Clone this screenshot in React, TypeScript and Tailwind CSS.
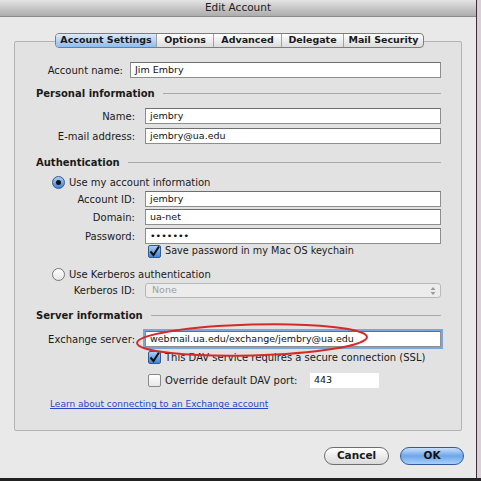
import React from "react";

const font = { fontFamily: '"DejaVu Sans", Verdana, sans-serif' };

const Input = ({ value, w = "flex-1", focus = false }: { value: string; w?: string; focus?: boolean }) => (
  <div
    className={`${w} h-[16px] bg-white border border-[#8e8e8e] border-t-[#6e6e6e] flex items-center pl-[4px] text-[9.5px] text-[#111] ${
      focus ? "ring-2 ring-[#7aa6de]" : ""
    }`}
  >
    {value}
  </div>
);

const Heading = ({ text }: { text: string }) => (
  <div className="h-[14px] flex items-center pl-[21px]">
    <span className="font-bold text-[10px] text-[#1a1a1a]">{text}</span>
    <div className="flex-1 h-px bg-[#a9a9a9] ml-[8px]" />
  </div>
);

const Row = ({ label, children, mt }: { label: string; children: React.ReactNode; mt: string }) => (
  <div className={`flex items-center ${mt}`}>
    <div className="w-[121px] text-right text-[10px] text-[#1a1a1a] pr-px">{label}</div>
    <div className="ml-[9px] flex-1 flex">{children}</div>
  </div>
);

const Radio = ({ on }: { on: boolean }) =>
  on ? (
    <div className="w-[13px] h-[13px] rounded-full border border-[#34598f] bg-gradient-to-b from-[#a9cdf5] to-[#3d84d8] flex items-center justify-center">
      <div className="w-[5px] h-[5px] rounded-full bg-[#111]" />
    </div>
  ) : (
    <div className="w-[13px] h-[13px] rounded-full border border-[#777] bg-gradient-to-b from-white to-[#e6e6e6]" />
  );

const Check = ({ on }: { on: boolean }) =>
  on ? (
    <div className="w-[13px] h-[13px] rounded-[2px] border border-[#34598f] bg-gradient-to-b from-[#a9cdf5] to-[#3d84d8] flex items-center justify-center">
      <svg width="11" height="11" viewBox="0 0 11 11">
        <path d="M1.5 5.5 L4.5 9 L10 0.5" fill="none" stroke="#111" strokeWidth="2" />
      </svg>
    </div>
  ) : (
    <div className="w-[13px] h-[13px] rounded-[2px] border border-[#888] bg-gradient-to-b from-white to-[#e8e8e8]" />
  );

const tabs = ["Account Settings", "Options", "Advanced", "Delegate", "Mail Security"];
const tabW = ["w-[100px]", "w-[57px]", "w-[68px]", "w-[62px]", "w-[80px]"];

export default function App() {
  return (
    <div className="w-[481px] h-[481px] flex flex-col bg-[#222]" style={font}>
      <div className="flex flex-1">
        <div className="w-[477px] flex flex-col bg-[#e9e9e9] border-r border-[#3a3038]">
          <div className="h-[17px] bg-gradient-to-b from-[#e4e4e4] to-[#acacac] border-b border-[#8a8a8a] flex items-center justify-center text-[10.5px] text-[#222]">
            Edit Account
          </div>

          <div className="flex justify-start pl-[55px] mt-[16px] relative z-10">
            <div className="flex h-[15px] rounded-[4px] border border-[#7d7d7d] overflow-hidden bg-gradient-to-b from-white to-[#dcdcdc]">
              {tabs.map((t, i) => (
                <div
                  key={t}
                  className={`${tabW[i]} flex items-center justify-center text-[9.5px] font-bold text-[#1a1a1a] ${
                    i > 0 ? "border-l border-[#a0a0a0]" : ""
                  } ${i === 0 ? "bg-gradient-to-b from-[#dceafa] to-[#8fbcef]" : ""}`}
                >
                  {t}
                </div>
              ))}
            </div>
          </div>

          <div className="mx-[14px] -mt-[7px] border border-[#b3b3b3] bg-[#e2e2e2] rounded-[2px] flex flex-col pr-[20px] pb-[19px]">
            <div className="flex items-center mt-[20px]">
              <div className="w-[108px] text-right text-[10px] text-[#1a1a1a]">Account name:</div>
              <div className="ml-[7px] flex-1 flex">
                <Input value="Jim Embry" />
              </div>
            </div>

            <div className="mt-[8px]">
              <Heading text="Personal information" />
            </div>
            <Row label="Name:" mt="mt-[8px]">
              <Input value="jembry" />
            </Row>
            <Row label="E-mail address:" mt="mt-[4px]">
              <Input value="jembry@ua.edu" />
            </Row>

            <div className="mt-[11px]">
              <Heading text="Authentication" />
            </div>
            <div className="flex items-center h-[14px] mt-[6px] pl-[37px] gap-[4px]">
              <Radio on />
              <span className="text-[10px] text-[#1a1a1a]">Use my account information</span>
            </div>
            <Row label="Account ID:" mt="mt-[2px]">
              <Input value="jembry" />
            </Row>
            <Row label="Domain:" mt="mt-[2px]">
              <Input value="ua-net" />
            </Row>
            <Row label="Password:" mt="mt-[3px]">
              <Input value="•••••••" />
            </Row>
            <div className="flex items-center h-[13px] mt-[1px] pl-[133px] gap-[4px]">
              <Check on />
              <span className="text-[9.7px] text-[#1a1a1a]">Save password in my Mac OS keychain</span>
            </div>

            <div className="flex items-center h-[14px] mt-[9px] pl-[37px] gap-[4px]">
              <Radio on={false} />
              <span className="text-[10px] text-[#1a1a1a]">Use Kerberos authentication</span>
            </div>
            <Row label="Kerberos ID:" mt="mt-[2px]">
              <div className="flex-1 h-[15px] rounded-[3px] border border-[#b8b8b8] bg-[#ececec] flex items-center justify-between pl-[6px] pr-[4px]">
                <span className="text-[9.5px] text-[#a0a0a0]">None</span>
                <svg width="6" height="10" viewBox="0 0 6 10">
                  <path d="M3 1 L5.5 4 L0.5 4 Z M3 9 L5.5 6 L0.5 6 Z" fill="#9a9a9a" />
                </svg>
              </div>
            </Row>

            <div className="mt-[10px]">
              <Heading text="Server information" />
            </div>
            <div className="relative">
              <Row label="Exchange server:" mt="mt-[9px]">
                <Input value="webmail.ua.edu/exchange/jembry@ua.edu" focus />
              </Row>
              <svg
                className="absolute left-[119px] top-[0px] pointer-events-none"
                width="236"
                height="36"
                viewBox="0 0 236 36"
              >
                <ellipse cx="118" cy="18" rx="115" ry="15.5" fill="none" stroke="#d42a2a" strokeWidth="2" transform="rotate(-1.5 118 18)" />
              </svg>
            </div>
            <div className="flex items-center h-[13px] mt-[4px] pl-[133px] gap-[4px]">
              <Check on />
              <span className="text-[10px] text-[#1a1a1a]">This DAV service requires a secure connection (SSL)</span>
            </div>
            <div className="flex items-center h-[16px] mt-[8px] pl-[133px] gap-[4px]">
              <Check on={false} />
              <span className="text-[10px] text-[#1a1a1a] w-[141px]">Override default DAV port:</span>
              <div className="w-[69px] h-[15px] bg-white flex items-center pl-[4px] text-[9.5px] text-[#111]">443</div>
            </div>

            <div className="mt-[11px] pl-[35px] h-[12px] flex items-center">
              <span className="text-[9px] text-[#2747c8] underline">Learn about connecting to an Exchange account</span>
            </div>
          </div>

          <div className="flex justify-end gap-[11px] mt-[16px] pr-[12px]">
            <div className="w-[65px] h-[18px] rounded-full border border-[#6e6e6e] bg-gradient-to-b from-white to-[#dadada] flex items-center justify-center text-[10.5px] font-bold text-[#1a1a1a]">
              Cancel
            </div>
            <div className="w-[64px] h-[18px] rounded-full border border-[#2f5b9c] bg-gradient-to-b from-[#c9e0fa] via-[#6ea6e8] to-[#a7d0fa] flex items-center justify-center text-[10.5px] font-bold text-[#111]">
              OK
            </div>
          </div>
        </div>
        <div className="flex-1 bg-[#d8d0d6]" />
      </div>
      <div className="h-[3px] bg-[#222]" />
    </div>
  );
}
